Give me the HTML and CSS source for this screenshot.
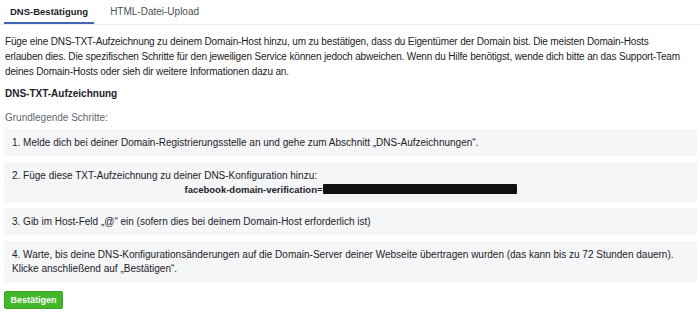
FILE: index.html
```html
<!DOCTYPE html>
<html lang="de">
<head>
  <meta charset="UTF-8" />
  <title>Domain bestätigen</title>
  <link rel="stylesheet" href="styles.css">
</head>
<body>
  <nav class="tabs">
    <div class="tab tab-active">DNS-Bestätigung</div>
    <div class="tab">HTML-Datei-Upload</div>
  </nav>
  <main class="content">
    <p class="intro">Füge eine DNS-TXT-Aufzeichnung zu deinem Domain-Host hinzu, um zu bestätigen, dass du Eigentümer der Domain bist. Die meisten Domain-Hosts<br>erlauben dies. Die spezifischen Schritte für den jeweiligen Service können jedoch abweichen. Wenn du Hilfe benötigst, wende dich bitte an das Support-Team deines Domain-Hosts oder sieh dir weitere Informationen dazu an.</p>
    <h2 class="section-title">DNS-TXT-Aufzeichnung</h2>
    <p class="steps-label">Grundlegende Schritte:</p>
    <div class="step">1. Melde dich bei deiner Domain-Registrierungsstelle an und gehe zum Abschnitt „DNS-Aufzeichnungen“.</div>
    <div class="step">
      2. Füge diese TXT-Aufzeichnung zu deiner DNS-Konfiguration hinzu:
      <div class="record">facebook-domain-verification=<span class="redacted"></span></div>
    </div>
    <div class="step">3. Gib im Host-Feld „@“ ein (sofern dies bei deinem Domain-Host erforderlich ist)</div>
    <div class="step">4. Warte, bis deine DNS-Konfigurationsänderungen auf die Domain-Server deiner Webseite übertragen wurden (das kann bis zu 72 Stunden dauern).<br>Klicke anschließend auf „Bestätigen“.</div>
    <button class="btn-confirm">Bestätigen</button>
  </main>
</body>
</html>
```

FILE: styles.css
```css
* {
  box-sizing: border-box;
}
body {
  margin: 0;
  font-family: 'Liberation Sans', Arial, sans-serif;
  font-size: 10px;
  line-height: 14px;
  color: #1d2129;
  background: #fff;
}
.tabs {
  display: flex;
  gap: 10px;
  padding-left: 4px;
  border-bottom: 1px solid #e9ebee;
  height: 25px;
}
.tab {
  padding: 5px 6px 0;
  font-size: 10px;
  color: #4b4f56;
}
.tab-active {
  font-weight: bold;
  font-size: 9.5px;
  color: #1d2129;
  border-bottom: 2px solid #4267b2;
}
.content {
  padding: 9px 3px 0 5px;
}
.intro {
  margin: 0;
  line-height: 15px;
  letter-spacing: -0.15px;
}
.section-title {
  margin: 8px 0 0;
  font-size: 10px;
  font-weight: bold;
}
.steps-label {
  margin: 10px 0 4px;
  color: #616770;
}
.step {
  background: #f5f6f7;
  margin: 0 0 6px -1px;
  padding: 7px 8px 6px;
}
.record {
  text-align: center;
  font-size: 9.5px;
  font-weight: bold;
  line-height: 13px;
}
.redacted {
  display: inline-block;
  width: 194px;
  height: 10px;
  background: #111;
  border-radius: 1px;
  vertical-align: -1px;
}
.btn-confirm {
  margin-top: 3px;
  margin-left: -1px;
  width: 59px;
  height: 18px;
  border: 1px solid #36a420;
  border-radius: 2px;
  background: #42b72a;
  color: #fff;
  font-family: inherit;
  font-size: 9px;
  font-weight: bold;
  padding: 0;
}
```
